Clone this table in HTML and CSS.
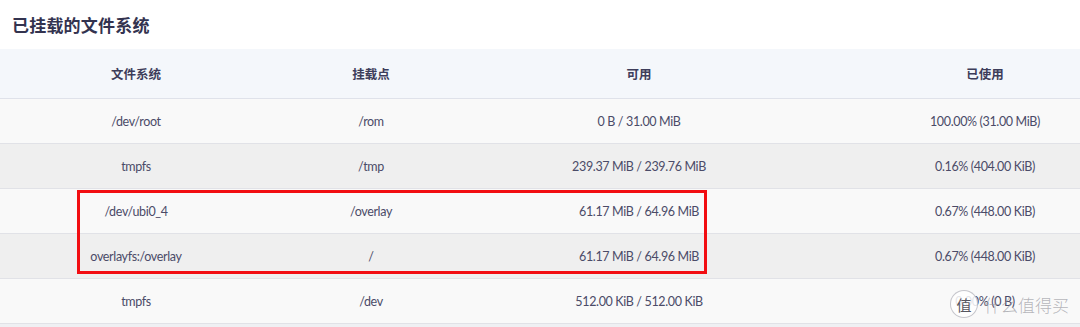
FILE: index.html
```html
<!DOCTYPE html>
<html lang="zh-CN">
<head>
<meta charset="utf-8">
<title>已挂载的文件系统</title>
<link rel="stylesheet" href="styles.css">
</head>
<body>
<div class="page">
  <h3 class="title">已挂载的文件系统</h3>
  <div class="table">
    <div class="row head">
      <div class="cell">文件系统</div>
      <div class="cell">挂载点</div>
      <div class="cell">可用</div>
      <div class="cell">已使用</div>
    </div>
    <div class="row odd">
      <div class="cell">/dev/root</div>
      <div class="cell">/rom</div>
      <div class="cell">0 B / 31.00 MiB</div>
      <div class="cell">100.00% (31.00 MiB)</div>
    </div>
    <div class="row even">
      <div class="cell">tmpfs</div>
      <div class="cell">/tmp</div>
      <div class="cell">239.37 MiB / 239.76 MiB</div>
      <div class="cell">0.16% (404.00 KiB)</div>
    </div>
    <div class="row odd">
      <div class="cell">/dev/ubi0_4</div>
      <div class="cell">/overlay</div>
      <div class="cell">61.17 MiB / 64.96 MiB</div>
      <div class="cell">0.67% (448.00 KiB)</div>
    </div>
    <div class="row even">
      <div class="cell">overlayfs:/overlay</div>
      <div class="cell">/</div>
      <div class="cell">61.17 MiB / 64.96 MiB</div>
      <div class="cell">0.67% (448.00 KiB)</div>
    </div>
    <div class="row odd">
      <div class="cell">tmpfs</div>
      <div class="cell">/dev</div>
      <div class="cell">512.00 KiB / 512.00 KiB</div>
      <div class="cell">0.00% (0 B)</div>
    </div>
    <div class="row even tail"></div>
    <div class="highlight"></div>
  </div>
  <div class="watermark"><span class="wm-badge">值</span><span class="wm-text">什么值得买</span></div>
</div>
</body>
</html>
```
FILE: styles.css
```css
html, body {
  margin: 0;
  padding: 0;
  background: #ffffff;
}
body {
  width: 1080px;
  height: 327px;
  overflow: hidden;
  font-family: Lato, "Noto Sans CJK SC", sans-serif;
  color: #4b4b68;
}
.page {
  position: relative;
  width: 1080px;
  height: 327px;
  overflow: hidden;
}
.title {
  margin: 0;
  height: 49px;
  padding-left: 12px;
  display: flex;
  align-items: center;
  font-size: 17px;
  font-weight: 700;
  color: #33334f;
  font-family: "Noto Sans CJK SC", sans-serif;
  letter-spacing: 0.2px;
}
.table {
  position: relative;
  width: 1162px;
}
.row {
  display: grid;
  grid-template-columns: 272px 198px 338px 354px;
  height: 44px;
  border-bottom: 1px solid #e1e2e7;
  align-items: center;
}
.cell {
  text-align: center;
  font-size: 12.5px;
  letter-spacing: -0.35px;
  white-space: nowrap;
}
.head {
  height: 49px;
  background: #f4f7fb;
  border-bottom: 1px solid #dfe2ea;
}
.head .cell {
  font-family: "Noto Sans CJK SC", sans-serif;
  font-weight: 700;
  font-size: 12.5px;
  letter-spacing: 0;
  color: #3d3d5a;
}
.odd {
  background: #f9f9f9;
}
.even {
  background: #efefef;
}
.tail {
  height: 6px;
  background: #eff0f3;
  border-bottom: none;
}
.highlight {
  position: absolute;
  left: 77px;
  top: 141px;
  width: 624px;
  height: 78px;
  border: 3px solid #f20d12;
}
.watermark {
  position: absolute;
  left: 950px;
  top: 290px;
  display: flex;
  align-items: center;
  gap: 6px;
  color: rgba(120, 120, 130, 0.75);
}
.wm-badge {
  width: 26px;
  height: 26px;
  border-radius: 50%;
  background: rgba(255, 255, 255, 0.85);
  border: 1px solid rgba(160, 160, 170, 0.6);
  display: flex;
  align-items: center;
  justify-content: center;
  font-family: "Noto Sans CJK SC", sans-serif;
  font-size: 15px;
  color: #55555f;
}
.wm-text {
  font-family: "Noto Sans CJK SC", sans-serif;
  font-size: 17px;
  font-weight: 300;
  color: rgba(150, 150, 158, 0.7);
  letter-spacing: 0;
}
```
